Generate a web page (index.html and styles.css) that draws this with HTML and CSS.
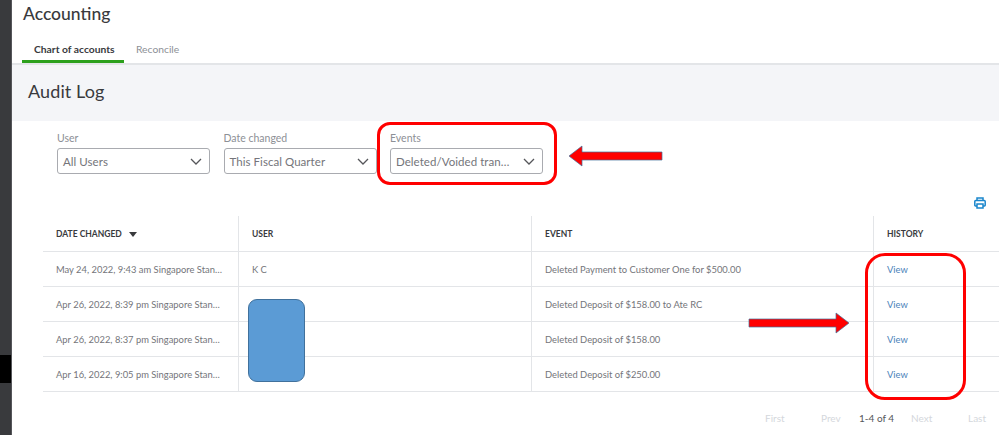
FILE: index.html
```html
<!DOCTYPE html>
<html lang="en">
<head>
<meta charset="utf-8">
<title>Audit Log</title>
<link rel="stylesheet" href="styles.css">
</head>
<body>
<div class="app">
  <aside class="rail"><div class="rail-mark"></div></aside>
  <main class="main">
    <header class="head">
      <h1 class="title">Accounting</h1>
      <nav class="tabs">
        <span class="tab active">Chart of accounts</span>
        <span class="tab">Reconcile</span>
      </nav>
    </header>
    <section class="band"><h2 class="band-title">Audit Log</h2></section>
    <section class="filters">
      <div class="field">
        <label class="label">User</label>
        <div class="select"><span class="value">All Users</span><svg class="chev" viewBox="0 0 12 7"><path d="M1 1l5 5 5-5"/></svg></div>
      </div>
      <div class="field">
        <label class="label">Date changed</label>
        <div class="select"><span class="value">This Fiscal Quarter</span><svg class="chev" viewBox="0 0 12 7"><path d="M1 1l5 5 5-5"/></svg></div>
      </div>
      <div class="field">
        <label class="label">Events</label>
        <div class="select"><span class="value">Deleted/Voided tran…</span><svg class="chev" viewBox="0 0 12 7"><path d="M1 1l5 5 5-5"/></svg></div>
      </div>
    </section>
    <div class="tools">
      <svg class="print" viewBox="0 0 12 12"><path d="M3 3.500V1h6v2.500M3 9H1.500A.7.7 0 0 1 .8 8.300V4.500a1 1 0 0 1 1-1h8.400a1 1 0 0 1 1 1v3.800a.7.7 0 0 1-.7.7H9M3 7h6v4H3z"/></svg>
    </div>
    <div class="table">
      <div class="row hrow">
        <div class="cell c1 th">DATE CHANGED <span class="sort"></span></div>
        <div class="cell c2 th">USER</div>
        <div class="cell c3 th">EVENT</div>
        <div class="cell c4 th">HISTORY</div>
      </div>
      <div class="row">
        <div class="cell c1">May 24, 2022, 9:43 am Singapore Stan…</div>
        <div class="cell c2">K C</div>
        <div class="cell c3">Deleted Payment to Customer One for $500.00</div>
        <div class="cell c4"><a class="link">View</a></div>
      </div>
      <div class="row">
        <div class="cell c1">Apr 26, 2022, 8:39 pm Singapore Stan…</div>
        <div class="cell c2"></div>
        <div class="cell c3">Deleted Deposit of $158.00 to Ate RC</div>
        <div class="cell c4"><a class="link">View</a></div>
      </div>
      <div class="row">
        <div class="cell c1">Apr 26, 2022, 8:37 pm Singapore Stan…</div>
        <div class="cell c2"></div>
        <div class="cell c3">Deleted Deposit of $158.00</div>
        <div class="cell c4"><a class="link">View</a></div>
      </div>
      <div class="row">
        <div class="cell c1">Apr 16, 2022, 9:05 pm Singapore Stan…</div>
        <div class="cell c2"></div>
        <div class="cell c3">Deleted Deposit of $250.00</div>
        <div class="cell c4"><a class="link">View</a></div>
      </div>
    </div>
    <div class="pager">
      <span class="pg first">First</span>
      <span class="pg prev">Prev</span>
      <span class="pg count">1-4 of 4</span>
      <span class="pg next">Next</span>
      <span class="pg last">Last</span>
    </div>
  </main>
</div>
<div class="mark ring-events"></div>
<div class="mark ring-view"></div>
<div class="mark redact"></div>
<svg class="mark arrow-left" viewBox="0 0 96 22"><path d="M1 11L14 1v6h80v8H14v6z"/></svg>
<svg class="mark arrow-right" viewBox="0 0 102 22"><path d="M1 7h87V1l13 10-13 10v-6H1z"/></svg>
</body>
</html>
```
FILE: styles.css
```css
* { box-sizing: border-box; }
html, body { margin: 0; height: 435px; overflow: hidden; background: #fff; }
body { font-family: "Lato", "Open Sans", sans-serif; color: #6b6c72; position: relative; }
.app { display: flex; height: 435px; }
.rail { width: 12px; flex: none; background: #393a3d; border-right: 1px solid #55565a; padding-top: 355px; }
.rail-mark { height: 28px; background: #000; }
.main { flex: 1; min-width: 0; }
.head { padding: 4px 0 0 11px; height: 65px; border-bottom: 2px solid #e3e5e8; }
.title { margin: 0; font-size: 17.500px; font-weight: 500; line-height: 20px; color: #393a3d; }
.tabs { display: flex; margin: 10px 0 0 -1px; }
.tab { padding: 0 12px; height: 29px; margin-bottom: -2px; line-height: 30px; font-size: 10.300px; color: #8d9096; white-space: nowrap; }
.tab.active { color: #393a3d; font-weight: 700; border-bottom: 3px solid #2ca01c; height: 29px; width: 102px; }
.band { height: 56px; background: #f4f5f8; padding: 0 0 4px 16px; display: flex; align-items: center; }
.band-title { margin: 0; font-size: 18px; font-weight: 400; color: #393a3d; letter-spacing: .1px; }
.filters { display: flex; gap: 13.500px; padding: 10px 0 0 45px; height: 79px; }
.field { width: 153px; }
.label { display: block; font-size: 10.500px; line-height: 14px; color: #8d9096; margin-bottom: 3px; }
.select { height: 26px; border: 1px solid #a9abb0; border-radius: 3px; display: flex; align-items: center; justify-content: space-between; padding: 0 7px 0 5px; }
.value { font-size: 11.500px; color: #74757a; letter-spacing: .05px; white-space: nowrap; }
.chev { width: 12px; height: 7px; fill: none; stroke: #55565a; stroke-width: 1.300; }
.tools { height: 16px; display: flex; justify-content: flex-end; padding-right: 13px; }
.print { width: 12px; height: 12px; margin-top: -3px; fill: none; stroke: #1a86cc; stroke-width: 1.500; }
.table { margin-left: 31px; }
.row { display: flex; height: 35px; border-bottom: 1px solid #e3e5e8; }
.hrow { height: 36px; }
.cell { padding-left: 13px; font-size: 9.400px; line-height: 35px; color: #74757a; border-right: 1px solid #e3e5e8; white-space: nowrap; overflow: hidden; }
.th { font-size: 8.500px; font-weight: 700; line-height: 37px; color: #393a3d; }
.c1 { width: 196px; }
.c2 { width: 293px; }
.c3 { width: 342px; }
.c4 { flex: 1; border-right: 0; }
.sort { display: inline-block; margin-left: 5px; border: 4px solid transparent; border-top: 5px solid #393a3d; border-bottom: 0; vertical-align: 0; }
.link { color: #4a82ba; }
.pager { position: relative; height: 43px; font-size: 10px; line-height: 52px; }
.pg { position: absolute; top: 0; color: #d4d7dc; }
.first { left: 753px; }
.prev { left: 809px; }
.count { left: 847px; color: #55565a; }
.next { left: 899px; }
.last { left: 956px; }
.mark { position: absolute; }
.ring-events { left: 377px; top: 122px; width: 180px; height: 63px; border: 3px solid #f00; border-radius: 13px; }
.ring-view { left: 865px; top: 253px; width: 101px; height: 147px; border: 3px solid #f00; border-radius: 20px; }
.redact { left: 248px; top: 299px; width: 57px; height: 83px; background: #5b9bd5; border: 1px solid #41719c; border-radius: 9px; }
.arrow-left { left: 568px; top: 145px; width: 96px; height: 22px; fill: #f00; stroke: #41719c; stroke-width: .7; }
.arrow-right { left: 748px; top: 312px; width: 102px; height: 22px; fill: #f00; stroke: #41719c; stroke-width: .7; }
```
